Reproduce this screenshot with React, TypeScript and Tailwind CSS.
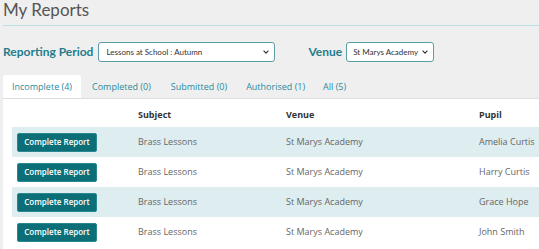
import React from "react";

const Chevron = () => (
  <svg width="6" height="4" viewBox="0 0 6 4" className="shrink-0">
    <path d="M0.6 0.7 L3 3.1 L5.4 0.7" fill="none" stroke="#333" strokeWidth="1.1" />
  </svg>
);

const rows = ["Amelia Curtis", "Harry Curtis", "Grace Hope", "John Smith"];

export default function App() {
  return (
    <div className="w-[539px] h-[249px] overflow-hidden bg-[#efefef] pl-[3px] font-['Lato',sans-serif]">
      <h1 className="text-[17px] leading-[20px] text-[#555555] font-normal">My Reports</h1>
      <div className="mt-[5px] h-px bg-[#b9dfe3]" />
      <div className="mt-[16px] flex items-center h-[20px]">
        <span className="text-[12px] font-bold text-[#1f7d8c] leading-none">Reporting Period</span>
        <div className="ml-[5px] w-[177px] h-[20px] border border-[#5c9ea7] rounded-[3px] bg-white flex items-center pl-[7px] pr-[5px]">
          <span className="flex-1 text-[8px] text-[#333]">Lessons at School : Autumn</span>
          <Chevron />
        </div>
        <span className="ml-[33px] text-[12px] font-bold text-[#1f7d8c] leading-none">Venue</span>
        <div className="ml-[4px] w-[88px] h-[20px] border border-[#5c9ea7] rounded-[3px] bg-white flex items-center pl-[6px] pr-[5px]">
          <span className="flex-1 text-[8px] text-[#333]">St Marys Academy</span>
          <Chevron />
        </div>
      </div>
      <div className="mt-[13px] flex h-[24px] gap-[2px] border-b border-[#dedede] font-['Open_Sans',sans-serif] text-[9px] text-[#2b8b9c]">
        <div className="bg-white rounded-t-[3px] px-[9px] flex items-center">Incomplete (4)</div>
        <div className="px-[9px] flex items-center">Completed (0)</div>
        <div className="px-[9px] flex items-center">Submitted (0)</div>
        <div className="px-[8px] flex items-center">Authorised (1)</div>
        <div className="px-[8px] flex items-center">All (5)</div>
      </div>
      <div className="bg-white pl-[9px] pt-[4px] h-[200px] font-['Open_Sans',sans-serif]">
        <div className="grid grid-cols-[126px_148px_193px_1fr] h-[24px] items-center text-[9px] font-bold text-[#333]">
          <div />
          <div>Subject</div>
          <div>Venue</div>
          <div>Pupil</div>
        </div>
        {rows.map((p, i) => (
          <div
            key={p}
            className={`grid grid-cols-[126px_148px_193px_1fr] h-[30px] items-center text-[9px] text-[#666] ${i % 2 === 0 ? "bg-[#ddedf0]" : "bg-white"}`}
          >
            <div className="pl-[5px]">
              <button className="w-[80px] h-[19px] rounded-[2px] bg-[#0c6f78] border border-[#2a8890] text-white text-[8px] font-semibold flex items-center justify-center">
                Complete Report
              </button>
            </div>
            <div>Brass Lessons</div>
            <div>St Marys Academy</div>
            <div>{p}</div>
          </div>
        ))}
      </div>
    </div>
  );
}
